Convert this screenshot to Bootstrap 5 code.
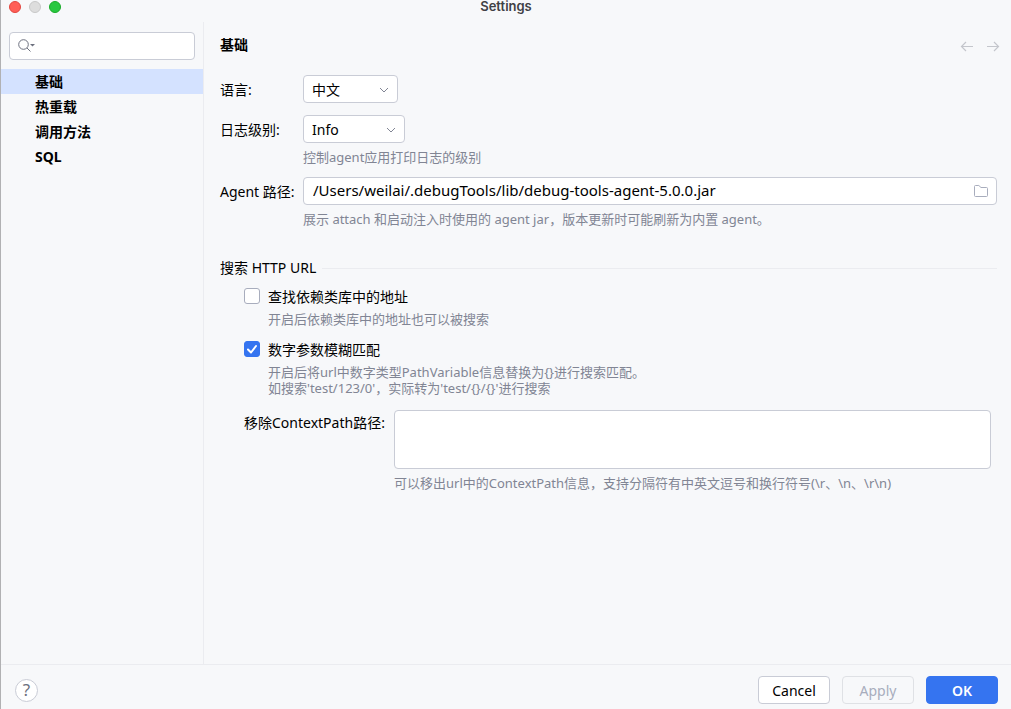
<!DOCTYPE html>
<html lang="zh-CN">
<head>
<meta charset="utf-8">
<meta name="viewport" content="width=device-width, initial-scale=1">
<title>Settings</title>
<link href="https://cdn.jsdelivr.net/npm/bootstrap@5.3.0/dist/css/bootstrap.min.css" rel="stylesheet">
<style>
  :root { --line: #ebecf0; --edge: #c9ccd6; --muted: #818594; --accent: #3574f0; }
  body { font-family: "Noto Sans", "Noto Sans CJK SC", sans-serif; font-size: 14px; line-height: 20px; color: #000; background: #f7f8fa; }
  .window { border-left: 1px solid #b1b1b3; }
  .titlebar { height: 22px; padding: 0 8px; }
  .titlebar h1 { font-family: Inter, "Noto Sans", sans-serif; font-size: 13px; line-height: 13px; font-weight: 600; color: #3f4045; }
  .light { width: 12px; height: 12px; margin-top: 1px; border: 1px solid; }
  .light-close { background: #ff5f57; border-color: #e2463f; }
  .light-min { background: #dddddd; border-color: #c8c8c8; }
  .light-max { background: #28c840; border-color: #1aab29; }
  .sidebar { width: 203px; border-right: 1px solid var(--line); }
  .form-control, .form-select { font-size: 14px; line-height: 20px; color: #000; background-color: #fff; border: 1px solid var(--edge); border-radius: 4px; }
  .search-box { margin: 10px 8px 9px; height: 28px; }
  .search-box .form-control { height: 28px; padding-left: 32px; }
  .search-box svg { position: absolute; left: 9px; top: 7px; }
  .side-nav a { display: block; height: 25px; line-height: 25px; padding-left: 34px; font-weight: 700; color: #000; text-decoration: none; }
  .side-nav a.active { background: #d4e2ff; }
  .panel { padding: 13px 14px 0 16px; }
  .panel h2 { font-size: 14px; line-height: 20px; font-weight: 700; }
  .nav-arrows { gap: 10px; margin-right: -4px; }
  .nav-arrows button, .browse { line-height: 0; }
  .field { display: grid; grid-template-columns: 83px minmax(0, 1fr); align-items: center; }
  .field label { padding-top: 1px; }
  .field .form-select { appearance: none; background-image: none; height: 28px; padding: 4px 8px 2px; }
  .field .form-control { height: 28px; padding: 2px 9px 4px; font-size: 15px; }
  .pick svg { position: absolute; right: 8px; top: 9px; pointer-events: none; }
  .pick-short { width: 95px; }
  .pick-long { width: 102px; }
  .hint { color: var(--muted); font-size: 13px; line-height: 16px; }
  .field .hint { grid-column: 2; margin-top: 6px; }
  .browse { position: absolute; right: 8px; top: 6px; }
  .group-title { font-size: 14px; line-height: 20px; gap: 6px; margin: 31px 0 9px; }
  .group-title::after { content: ""; flex: 1; height: 1px; background: var(--line); }
  .option { display: grid; grid-template-columns: 24px minmax(0, 1fr); margin: 0 0 13px 24px; }
  .option .form-check-input { width: 16px; height: 16px; margin: 1px 0 0; border: 1px solid #a8adbd; border-radius: 3px; }
  .option .form-check-input:checked { border-color: var(--accent); background: var(--accent) url("data:image/svg+xml,%3csvg xmlns='http://www.w3.org/2000/svg' viewBox='0 0 14 14'%3e%3cpath fill='none' stroke='%23fff' stroke-width='2' stroke-linecap='round' stroke-linejoin='round' d='M3 7.500l3 3 5-6.500'/%3e%3c/svg%3e") center / 14px 14px no-repeat; }
  .option .hint { grid-column: 2; margin-top: 4px; }
  .context { display: grid; grid-template-columns: 150px minmax(0, 1fr); margin: 14px 6px 0 24px; }
  .context label { padding-top: 3px; }
  .context textarea { height: 59px; resize: none; }
  .context .hint { grid-column: 2; margin-top: 6px; }
  .footer-bar { height: 45px; padding: 6px 13px 0 14px; border-top: 1px solid var(--line); }
  .help { width: 23px; height: 23px; border: 1px solid var(--edge); background: #fff; color: #6c707e; font-size: 17px; line-height: 20px; }
  .footer-bar .btn { height: 28px; min-width: 72px; padding: 4px 12px 2px; font-size: 14px; line-height: 20px; border-radius: 4px; }
  .btn-plain, .btn-plain:hover { background: #fff; border-color: var(--edge); color: #000; }
  .footer-bar .btn-plain:disabled { background: transparent; border-color: #dfe1e5; color: #a8adbd; opacity: 1; }
  .btn-main, .btn-main:hover { background: var(--accent); border-color: var(--accent); color: #fff; font-weight: 600; }
</style>
</head>
<body>
<div class="window d-flex flex-column min-vh-100">
  <header class="titlebar d-flex position-relative">
    <div class="d-flex gap-2">
      <span class="light light-close rounded-circle"></span>
      <span class="light light-min rounded-circle"></span>
      <span class="light light-max rounded-circle"></span>
    </div>
    <h1 class="position-absolute start-0 end-0 text-center m-0">Settings</h1>
  </header>

  <div class="d-flex flex-grow-1">
    <aside class="sidebar flex-shrink-0">
      <div class="search-box position-relative">
        <input class="form-control" type="search" aria-label="Search settings">
        <svg width="18" height="14" viewBox="0 0 18 14" fill="none" stroke="#6c707e"><circle cx="5.500" cy="5.500" r="4.800"/><path d="M9 9l3.500 3.500"/><path d="M12 5h5l-2.500 2.500z" fill="#6c707e" stroke="none"/></svg>
      </div>
      <nav class="side-nav">
        <a href="#" class="active" aria-current="page">基础</a>
        <a href="#">热重载</a>
        <a href="#">调用方法</a>
        <a href="#">SQL</a>
      </nav>
    </aside>

    <main class="panel flex-grow-1">
      <div class="d-flex justify-content-between align-items-center mb-3 pb-1">
        <h2 class="m-0">基础</h2>
        <div class="nav-arrows d-flex pt-1">
          <button type="button" class="border-0 bg-transparent p-0" aria-label="Back"><svg width="16" height="16" viewBox="0 0 16 16" fill="none" stroke="#c4c6cc" stroke-width="1.200"><path d="M14 7.500H2.500M7 3L2.500 7.500 7 12"/></svg></button>
          <button type="button" class="border-0 bg-transparent p-0" aria-label="Forward"><svg width="16" height="16" viewBox="0 0 16 16" fill="none" stroke="#c4c6cc" stroke-width="1.200"><path d="M2 7.500h11.500M9 3l4.500 4.500L9 12"/></svg></button>
        </div>
      </div>

      <div class="field mb-2 pb-1">
        <label for="lang">语言:</label>
        <div class="pick pick-short position-relative">
          <select id="lang" class="form-select"><option>中文</option></select>
          <svg width="12" height="12" viewBox="0 0 12 12" fill="none" stroke="#818594"><path d="M2 4l4 4 4-4"/></svg>
        </div>
      </div>
      <div class="field mb-2 pb-1">
        <label for="level">日志级别:</label>
        <div class="pick pick-long position-relative">
          <select id="level" class="form-select"><option>Info</option></select>
          <svg width="12" height="12" viewBox="0 0 12 12" fill="none" stroke="#818594"><path d="M2 4l4 4 4-4"/></svg>
        </div>
        <div class="hint">控制agent应用打印日志的级别</div>
      </div>
      <div class="field">
        <label for="agent">Agent 路径:</label>
        <div class="position-relative">
          <input id="agent" class="form-control" type="text" value="/Users/weilai/.debugTools/lib/debug-tools-agent-5.0.0.jar">
          <button type="button" class="browse border-0 bg-transparent p-0" aria-label="Browse"><svg width="16" height="16" viewBox="0 0 16 16" fill="none" stroke="#a8adbd"><path d="M1.500 3.500a1 1 0 0 1 1-1h3.300L8 4.500h5.500a1 1 0 0 1 1 1v7a1 1 0 0 1-1 1h-11a1 1 0 0 1-1-1z"/></svg></button>
        </div>
        <div class="hint">展示 attach 和启动注入时使用的 agent jar，版本更新时可能刷新为内置 agent。</div>
      </div>

      <h3 class="group-title d-flex align-items-center fw-normal">搜索 HTTP URL</h3>
      <div class="option">
        <input id="libs" class="form-check-input" type="checkbox">
        <label for="libs">查找依赖类库中的地址</label>
        <div class="hint">开启后依赖类库中的地址也可以被搜索</div>
      </div>
      <div class="option">
        <input id="fuzzy" class="form-check-input" type="checkbox" checked>
        <label for="fuzzy">数字参数模糊匹配</label>
        <div class="hint">开启后将url中数字类型PathVariable信息替换为{}进行搜索匹配。<br>如搜索'test/123/0'，实际转为'test/{}/{}'进行搜索</div>
      </div>
      <div class="context">
        <label for="paths">移除ContextPath路径:</label>
        <textarea id="paths" class="form-control"></textarea>
        <div class="hint">可以移出url中的ContextPath信息，支持分隔符有中英文逗号和换行符号(\r、\n、\r\n)</div>
      </div>
    </main>
  </div>

  <footer class="footer-bar d-flex align-items-center">
    <button type="button" class="help rounded-circle p-0" aria-label="Help">?</button>
    <div class="d-flex gap-2 ms-auto">
      <button type="button" class="btn btn-plain me-1">Cancel</button>
      <button type="button" class="btn btn-plain me-1" disabled>Apply</button>
      <button type="button" class="btn btn-main">OK</button>
    </div>
  </footer>
</div>
<script src="https://cdn.jsdelivr.net/npm/bootstrap@5.3.0/dist/js/bootstrap.bundle.min.js"></script>
</body>
</html>
